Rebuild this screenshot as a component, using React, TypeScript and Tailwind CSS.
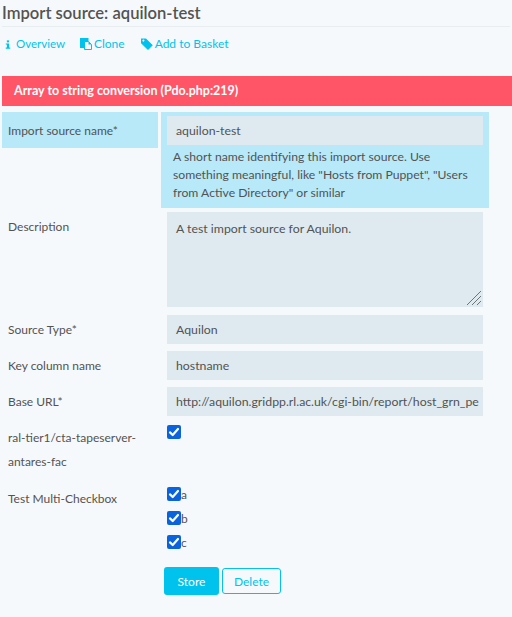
const font = { fontFamily: 'Lato, "Noto Sans", sans-serif' };

function Check() {
  return (
    <span className="flex h-[14px] w-[14px] shrink-0 items-center justify-center rounded-[2px] bg-[#0a63dd]">
      <svg viewBox="0 0 14 14" className="h-[14px] w-[14px]" fill="none" stroke="#fff" strokeWidth="2.2" strokeLinecap="round" strokeLinejoin="round">
        <path d="M3 7.4 L5.7 10 L11 4" />
      </svg>
    </span>
  );
}

function Row({ label, children, className = "" }: { label: string; children: React.ReactNode; className?: string }) {
  return (
    <div className={`flex ${className}`}>
      <div className="w-[159px] pl-2 pt-[4px] text-[12px] leading-[21px] text-[#535353]">{label}</div>
      <div className="ml-2 w-[316px]">{children}</div>
    </div>
  );
}

function Field({ value }: { value: string }) {
  return (
    <div className="h-[29px] overflow-hidden whitespace-nowrap bg-[#deeaf0] pl-[9px] text-[12.3px] leading-[29px] text-[#535353]">
      {value}
    </div>
  );
}

export default function App() {
  return (
    <div className="h-[617px] w-[512px] overflow-hidden bg-[#f6f9fb] text-[#535353]" style={font}>
      <div className="mx-[2px] h-[27px] border-b border-[#e8edf0] text-[16.6px] font-semibold leading-[26px]">
        Import source: aquilon-test
      </div>
      <div className="flex h-[49px] items-start pl-[5px] pt-[8px] text-[12px] leading-[18px] text-[#00c3ed]">
        <span className="flex items-center gap-[5px] text-[11.5px]">
          <svg viewBox="0 0 8 12" className="h-[11px] w-[6px]" fill="currentColor">
            <rect x="2.5" y="0.5" width="3" height="2.6" />
            <path d="M1 4.5 H5.5 V10 H7 V11.5 H1 V10 H2.5 V6 H1 Z" />
          </svg>
          Overview
        </span>
        <span className="ml-[15px] flex items-center gap-[2px]">
          <svg viewBox="0 0 12 12" className="h-[12px] w-[12px]" fill="currentColor">
            <rect x="0" y="0" width="8.5" height="10" />
            <path d="M4.5 3.5 H8.5 L11.5 6.5 V11.5 H4.5 Z" fill="#f6f9fb" stroke="currentColor" strokeWidth="1" />
            <path d="M8.5 3.5 V6.5 H11.5 Z" />
          </svg>
          Clone
        </span>
        <span className="ml-[16px] flex items-center gap-[2px]">
          <svg viewBox="0 0 12 12" className="h-[12px] w-[12px]" fill="currentColor">
            <path d="M0 0.5 H5 L11.8 7.2 L7 12 L0 5.2 Z M2.4 1.6 A1 1 0 1 0 2.41 1.6 Z" fillRule="evenodd" />
          </svg>
          Add to Basket
        </span>
      </div>
      <div className="ml-[2px] h-[30px] bg-[#ff5566] pl-[12px] text-[12.5px] font-bold leading-[30px] text-white">
        Array to string conversion (Pdo.php:219)
      </div>

      <div className="mt-[6px] flex">
        <div className="ml-[2px] h-[36px] w-[156px] bg-[#b7e9f9] pl-[6px] pt-[8px] text-[12px] leading-[21px]">Import source name*</div>
        <div className="ml-[3px] h-[96px] w-[328px] bg-[#b7e9f9] pt-[4px]">
          <div className="mx-[6px]"><Field value="aquilon-test" /></div>
          <p className="pl-[12px] pr-[8px] pt-[3px] text-[12.2px] leading-[18px]">
            A short name identifying this import source. Use something meaningful, like "Hosts from Puppet", "Users from Active Directory" or similar
          </p>
        </div>
      </div>

      <Row label="Description" className="mt-[4px]">
        <div className="relative h-[95px] bg-[#deeaf0] pl-[9px] pt-[8px] text-[12.3px] leading-[18px]">
          A test import source for Aquilon.
          <svg viewBox="0 0 15 15" className="absolute bottom-[2px] right-[2px] h-[15px] w-[15px]" stroke="#6f7477" strokeWidth="1">
            <path d="M1 15 L15 1 M6 15 L15 6 M11 15 L15 11" />
          </svg>
        </div>
      </Row>
      <Row label="Source Type*" className="mt-[8px]"><Field value="Aquilon" /></Row>
      <Row label="Key column name" className="mt-[7px]"><Field value="hostname" /></Row>
      <Row label="Base URL*" className="mt-[7px]"><Field value="http://aquilon.gridpp.rl.ac.uk/cgi-bin/report/host_grn_pe" /></Row>
      <div className="mt-[9px] flex">
        <div className="w-[159px] pl-2 pt-px text-[12px] leading-[24px]">ral-tier1/cta-tapeserver-antares-fac</div>
        <div className="ml-2"><Check /></div>
      </div>
      <div className="mt-[13px] flex">
        <div className="w-[159px] pl-2 pt-px text-[12px] leading-[21px]">Test Multi-Checkbox</div>
        <div className="ml-2 flex flex-col gap-[10px]">
          {["a", "b", "c"].map((l) => (
            <div key={l} className="flex h-[14px] items-center text-[12px]"><Check /><span className="pt-[2px]">{l}</span></div>
          ))}
        </div>
      </div>
      <div className="mt-[18px] flex items-center pl-[164px]">
        <button className="h-[28px] w-[55px] rounded-[3px] bg-[#00c3ed] pt-[2px] text-[12px] text-white">Store</button>
        <button className="ml-[3px] h-[26px] w-[59px] rounded-[3px] border border-[#00c3ed] pt-[2px] text-[12px] text-[#00c3ed]">Delete</button>
      </div>
    </div>
  );
}
